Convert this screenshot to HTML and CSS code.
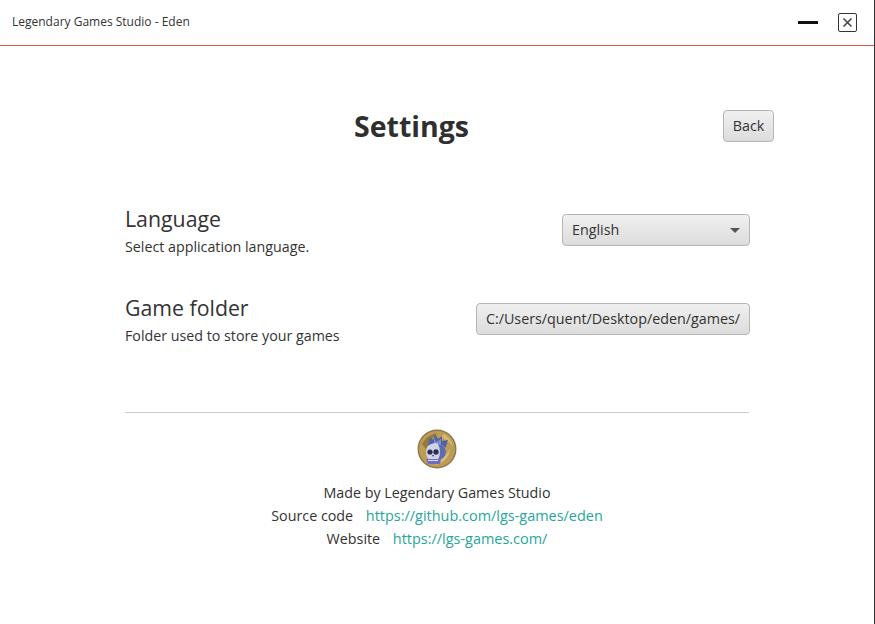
FILE: index.html

```html
<!DOCTYPE html>
<html lang="en">
<head>
    <meta charset="UTF-8">
    <meta name="viewport" content="width=device-width, initial-scale=1.0">
    <title>Legendary Games Studio - Eden</title>
    <link rel="stylesheet" href="styles.css">
</head>
<body>
    <div class="window">
        <header class="titlebar">
            <span class="app-name">Legendary Games Studio - Eden</span>
            <div class="window-buttons">
                <span class="minimize"></span>
                <span class="close">
                    <svg width="11" height="11" viewBox="0 0 11 11">
                        <path d="M1.5 1.5 L9.5 9.5 M9.5 1.5 L1.5 9.5" stroke="#444" stroke-width="1.6" fill="none"/>
                    </svg>
                </span>
            </div>
        </header>

        <main class="page">
            <div class="page-head">
                <h1>Settings</h1>
                <button class="btn back-btn" type="button">Back</button>
            </div>

            <section class="settings">
                <div class="setting">
                    <div class="setting-text">
                        <h2>Language</h2>
                        <p>Select application language.</p>
                    </div>
                    <button class="btn select-btn" type="button">
                        <span>English</span>
                        <span class="arrow"></span>
                    </button>
                </div>
                <div class="setting">
                    <div class="setting-text">
                        <h2>Game folder</h2>
                        <p>Folder used to store your games</p>
                    </div>
                    <button class="btn" type="button">C:/Users/quent/Desktop/eden/games/</button>
                </div>
            </section>

            <footer class="credits">
                <svg class="logo" width="40" height="40" viewBox="0 0 40 40">
                    <circle cx="20" cy="20" r="19.5" fill="#8d7a4e"/>
                    <circle cx="20" cy="20" r="18" fill="#bd9c55"/>
                    <path d="M5 15 Q10 6 20 4 Q13 11 9 20Z" fill="#94793f"/>
                    <path d="M27 5 Q34 9 36 17 Q31 12 24 8Z" fill="#d3b66f"/>
                    <path d="M32 25 Q28 34 18 36 Q27 30 33 20Z" fill="#d8bd78"/>
                    <path d="M11 17 L13 8 L16 11 L18 5 L21 10 L25 7 L25 12 L31 11 L28 20 Z" fill="#4f62a6"/>
                    <path d="M17 8 L19 13 L24 10 L24 15 L17 15Z" fill="#7d8fd0"/>
                    <path d="M9 23 Q9 15 18 14 Q28 15 29 22 Q29 28 24 30 L23 32 L12 32 L11 29 Q9 27 9 23Z" fill="#cfd3ea"/>
                    <path d="M21 15 Q28 16 29 22 Q29 28 24 30 L21 31 Q25 23 21 15Z" fill="#5f6cac"/>
                    <circle cx="13" cy="23" r="2.6" fill="#2c2e50"/>
                    <circle cx="19" cy="23" r="2.7" fill="#2c2e50"/>
                    <path d="M15 26 L17 26 L16 28Z" fill="#33365e"/>
                    <path d="M9 30 H24 L23 35 H11Z" fill="#6f6cc4"/>
                    <path d="M11 31 H21 V32 H11Z" fill="#d9dbf0"/>
                </svg>
                <p>Made by Legendary Games Studio</p>
                <p>Source code <a href="#">https://github.com/lgs-games/eden</a></p>
                <p>Website <a href="#">https://lgs-games.com/</a></p>
            </footer>
        </main>
    </div>
</body>
</html>
```

FILE: styles.css

```css
html, body {
    margin: 0;
    padding: 0;
    height: 100%;
}
body {
    font-family: "Open Sans", "Noto Sans", sans-serif;
    color: #333;
    background-color: #fff;
}
.window {
    height: 100%;
    box-sizing: border-box;
    border-right: 1px solid #333;
}
.titlebar {
    height: 45px;
    border-bottom: 1px solid #d4583a;
    display: flex;
    align-items: center;
    justify-content: space-between;
    padding: 0 17px 0 12px;
}
.app-name {
    font-size: 12px;
    margin-top: -2px;
}
.window-buttons {
    display: flex;
    align-items: center;
    gap: 20px;
    margin-top: -1px;
}
.minimize {
    width: 20px;
    height: 3px;
    background-color: #111;
}
.close {
    width: 17px;
    height: 17px;
    border: 1px solid #333;
    border-radius: 2px;
    display: flex;
    align-items: center;
    justify-content: center;
}
.page {
    padding: 64px 125px 0;
}
.page-head {
    display: grid;
    grid-template-columns: 1fr auto 1fr;
    align-items: center;
    margin: 0 -25px 0 -76px;
}
.page-head h1 {
    grid-column: 2;
    margin: 0;
    font-size: 28.5px;
    font-weight: 700;
    line-height: 32px;
    color: #2f2f2f;
}
.back-btn {
    justify-self: end;
    width: 51px;
    justify-content: center;
    padding: 0 0 2px;
}
.btn {
    height: 32px;
    box-sizing: border-box;
    display: flex;
    align-items: center;
    padding: 0 9px 2px;
    border: 1px solid #b5b5b5;
    border-radius: 4px;
    background: linear-gradient(#f0f0f0, #dcdcdc);
    font-family: inherit;
    font-size: 14.3px;
    color: #333;
    cursor: pointer;
}
.select-btn {
    width: 188px;
    justify-content: space-between;
}
.arrow {
    width: 0;
    height: 0;
    margin-top: 2px;
    border-left: 5px solid transparent;
    border-right: 5px solid transparent;
    border-top: 5px solid #555;
}
.settings {
    margin: 64px -1px 0 0;
    display: flex;
    flex-direction: column;
    gap: 41px;
}
.setting {
    display: flex;
    align-items: center;
    justify-content: space-between;
    height: 48px;
}
.setting-text {
    padding-top: 2px;
}
.setting h2 {
    margin: 0;
    font-size: 21.3px;
    font-weight: 400;
    line-height: 26px;
}
.setting p {
    margin: 5px 0 0;
    font-size: 14.25px;
    line-height: 20px;
}
.credits {
    margin-top: 69px;
    border-top: 1px solid #ccc;
    padding-top: 16px;
    text-align: center;
    font-size: 14.3px;
}
.logo {
    display: block;
    margin: 0 auto 12px;
    filter: blur(0.4px);
}
.credits p {
    margin: 0;
    line-height: 23px;
}
.credits a {
    margin-left: 9px;
    font-size: 14.45px;
    color: #26a69a;
    text-decoration: none;
}
```
